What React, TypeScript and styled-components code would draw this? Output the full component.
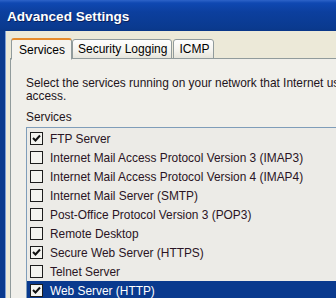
import styled, { createGlobalStyle } from 'styled-components';

const GlobalStyle = createGlobalStyle`
  html, body {
    margin: 0;
    padding: 0;
    width: 336px;
    height: 298px;
    overflow: hidden;
    background: #0b3a8e;
  }
  * { box-sizing: border-box; }
`;

const Window = styled.div`
  width: 336px;
  height: 298px;
  display: flex;
  flex-direction: column;
  background: #0b3a8e;
  overflow: hidden;
`;

const TitleBar = styled.div`
  height: 31px;
  flex: none;
  display: flex;
  align-items: center;
  padding: 1px 0 0 7px;
  background: linear-gradient(#2d63c8 0px, #0f48b2 3px, #0c3f9e 12px, #0a3a8f 28px, #0a3788 31px);
  color: #fff;
  font-family: 'Liberation Sans', Arial, sans-serif;
  font-weight: bold;
  font-size: 13.6px;
  text-shadow: 1px 1px 0 #0a1f5a;
`;

const Frame = styled.div`
  flex: 1;
  display: flex;
  padding-left: 5px;
  background: #0b3a8e;
`;

const Body = styled.div`
  flex: 1;
  background: #ece9d8;
  border-left: 1px solid #7e9fd6;
  padding: 6px 0 0 4px;
  display: flex;
  flex-direction: column;
`;

const TabStrip = styled.div`
  display: flex;
  align-items: flex-end;
  height: 22px;
  padding-left: 1px;
  position: relative;
  z-index: 1;
`;

const Tab = styled.div<{ $active?: boolean }>`
  height: ${(p) => (p.$active ? '22px' : '20px')};
  padding: ${(p) => (p.$active ? '0 6px 0 7px' : '0 4px 0 5px')};
  margin-right: ${(p) => (p.$active ? '0' : '1px')};
  margin-bottom: ${(p) => (p.$active ? '-1px' : '0')};
  display: flex;
  align-items: center;
  font-family: 'Liberation Sans', Arial, sans-serif;
  font-size: 12px;
  color: #000;
  border: 1px solid #919b9c;
  border-top: ${(p) => (p.$active ? '2px solid #e68b2c' : '1px solid #919b9c')};
  border-bottom: ${(p) => (p.$active ? '1px solid #f4f3ee' : '1px solid #919b9c')};
  border-radius: 3px 3px 0 0;
  background: ${(p) =>
    p.$active ? '#f4f3ee' : 'linear-gradient(#fefefe, #f4f3ee 60%, #e6e5dc)'};
`;

const Panel = styled.div`
  flex: 1;
  margin-top: -1px;
  background: #f0efea;
  border-left: 1px solid #919b9c;
  border-top: 1px solid #919b9c;
  padding: 18px 0 0 15px;
  display: flex;
  flex-direction: column;
`;

const Intro = styled.p`
  margin: 0;
  font-family: 'Liberation Sans', Arial, sans-serif;
  font-size: 11.9px;
  line-height: 13px;
  color: #1e1420;
  white-space: nowrap;
  width: 400px;
`;

const Label = styled.div`
  margin-top: 7px;
  font-family: 'Liberation Sans', Arial, sans-serif;
  font-size: 11.9px;
  line-height: 14px;
  color: #1e1420;
`;

const ListBox = styled.div`
  margin-top: 3px;
  flex: 1;
  background: #ecebe7;
  border-left: 1px solid #7f9db9;
  border-top: 1px solid #7f9db9;
  padding-top: 1px;
  display: flex;
  flex-direction: column;
`;

const Row = styled.div<{ $selected?: boolean }>`
  height: 19px;
  flex: none;
  display: flex;
  align-items: center;
  gap: 7px;
  padding-left: 3px;
  background: ${(p) => (p.$selected ? '#0a3a8e' : 'transparent')};
  color: ${(p) => (p.$selected ? '#fff' : '#2a1424')};
  font-family: 'Liberation Sans', Arial, sans-serif;
  font-size: 11.9px;
  white-space: nowrap;
`;

const Box = styled.span`
  width: 13px;
  height: 13px;
  flex: none;
  border: 1px solid #1c1c1c;
  background: #f4f4f0;
  display: flex;
  align-items: center;
  justify-content: center;
`;

const services = [
  { name: 'FTP Server', checked: true },
  { name: 'Internet Mail Access Protocol Version 3 (IMAP3)', checked: false },
  { name: 'Internet Mail Access Protocol Version 4 (IMAP4)', checked: false },
  { name: 'Internet Mail Server (SMTP)', checked: false },
  { name: 'Post-Office Protocol Version 3 (POP3)', checked: false },
  { name: 'Remote Desktop', checked: false },
  { name: 'Secure Web Server (HTTPS)', checked: true },
  { name: 'Telnet Server', checked: false },
  { name: 'Web Server (HTTP)', checked: true, selected: true },
];

function Check() {
  return (
    <svg width='9' height='9' viewBox='0 0 9 9'>
      <path d='M1 4 L3.5 6.5 L8 1.5' fill='none' stroke='#111' strokeWidth='2' />
    </svg>
  );
}

export default function App() {
  return (
    <>
      <GlobalStyle />
      <Window>
        <TitleBar>Advanced Settings</TitleBar>
        <Frame>
          <Body>
            <TabStrip>
              <Tab $active>Services</Tab>
              <Tab>Security Logging</Tab>
              <Tab>ICMP</Tab>
            </TabStrip>
            <Panel>
              <Intro>
                Select the services running on your network that Internet users can
                <br />
                access.
              </Intro>
              <Label>Services</Label>
              <ListBox>
                {services.map((s) => (
                  <Row key={s.name} $selected={s.selected}>
                    <Box>{s.checked && <Check />}</Box>
                    {s.name}
                  </Row>
                ))}
              </ListBox>
            </Panel>
          </Body>
        </Frame>
      </Window>
    </>
  );
}
